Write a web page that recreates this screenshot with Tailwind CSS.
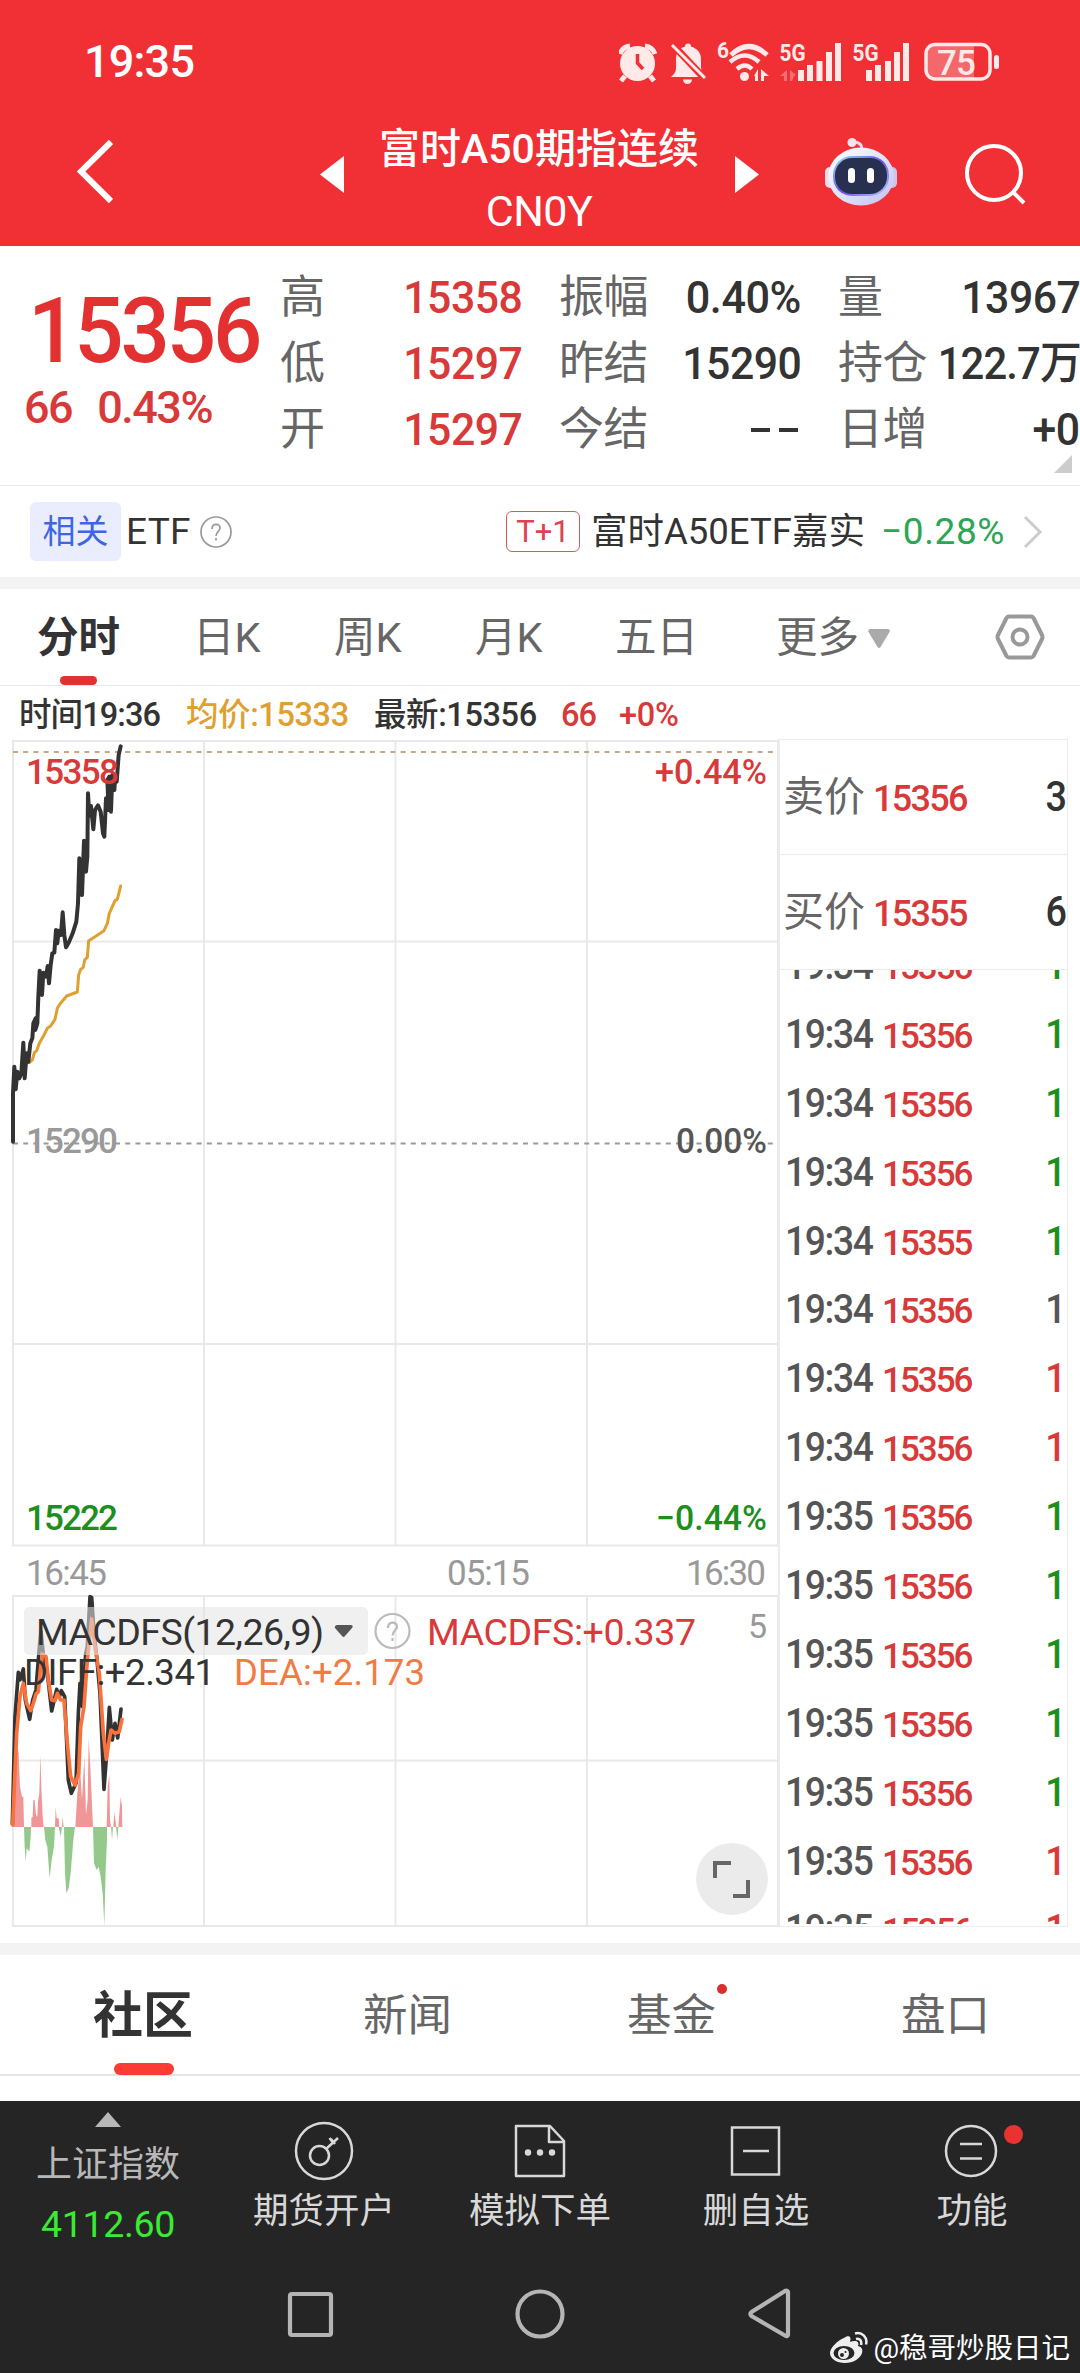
<!DOCTYPE html>
<html lang="zh-CN">
<head>
  <meta charset="UTF-8" />
  <meta name="viewport" content="width=device-width, initial-scale=1.0" />
  <title>富时A50期指连续 CN0Y</title>
  <script src="https://cdn.jsdelivr.net/npm/@tailwindcss/browser@4"></script>
</head>
<body class="w-[1080px] h-[2373px] overflow-hidden bg-white text-[#333] font-[Roboto,'Noto_Sans_CJK_SC',sans-serif] whitespace-nowrap flex flex-col">

  <!-- Header -->
  <header class="h-[246px] shrink-0 bg-[#f13035] text-white">
    <div class="h-[123px] flex items-center justify-between pl-[84px] pr-[80px]">
      <span class="text-[45px] leading-none font-medium tracking-[-0.8px]">19:35</span>
      <svg class="w-[381px] h-[50px] mt-px" viewBox="619 36 381 50" fill="#ffe9e9">
        <!-- alarm -->
        <circle cx="637.500" cy="62.500" r="17.500"/>
        <path d="M620 53a12 12 0 0 1 10-8M655 53a12 12 0 0 0-10-8" stroke="#ffe9e9" stroke-width="5" fill="none"/>
        <path d="M625 75l-4 5M650 75l4 5" stroke="#ffe9e9" stroke-width="5"/>
        <path d="M637.500 53v9l5.500 6" stroke="#f13035" stroke-width="3.500" fill="none"/>
        <!-- muted bell -->
        <path d="M671 76c3-3 5-5 5-9V58c0-7 4-11 9-12.500a3 3 0 0 1 6 0c6 2 10 6 10 12.500v8c0 4 2 7 5 10z"/>
        <path d="M683 78.500h9a4.500 4.500 0 0 1-9 0z"/>
        <path d="M674 45l32 34" stroke="#f13035" stroke-width="7"/>
        <path d="M672 44l33 33" stroke="#ffe9e9" stroke-width="3"/>
        <!-- wifi -->
        <text x="717" y="57" font-size="22" font-weight="700" textLength="12" lengthAdjust="spacingAndGlyphs">6</text>
        <g fill="none" stroke="#ffe9e9" stroke-width="5">
          <path d="M731 54q18-17 36 0"/>
          <path d="M730 61q15-13 29 0" stroke-width="4.500"/>
          <path d="M737 68q8-7 15 0" stroke-width="4.500"/>
        </g>
        <circle cx="744.500" cy="75.500" r="4.500"/>
        <path d="M758 68v12h-3v-5h-1zM761 68l8 7-5 0v5h-3z"/>
        <path d="M787 69v11h-3v-5h-4zM790 69l6 5-2 1-2 5h-2z" opacity=".35"/>
        <!-- signals -->
        <text x="779.500" y="60" font-size="24" font-weight="700" textLength="26" lengthAdjust="spacingAndGlyphs">5G</text>
        <path d="M798 69h6v11h-6zM807 64h6v16h-6zM816.500 60h6v20h-6zM826 51h6v29h-6zM835 42h6v38h-6z"/>
        <text x="852.500" y="60" font-size="24" font-weight="700" textLength="26" lengthAdjust="spacingAndGlyphs">5G</text>
        <path d="M866 69h6v11h-6zM875 64h6v16h-6zM885 60h6v20h-6zM894 51h6v29h-6zM903 42h6v38h-6z"/>
        <!-- battery -->
        <path d="M935 44h39v34h-39a9 9 0 0 1-9-9V53a9 9 0 0 1 9-9z" opacity=".3"/>
        <rect x="926" y="43.500" width="64" height="34.500" rx="9" fill="none" stroke="#ffe9e9" stroke-width="3.500"/>
        <rect x="994" y="54" width="5" height="14" rx="2.500"/>
        <text x="937" y="73.500" font-size="35" font-weight="500" textLength="39">75</text>
      </svg>
    </div>
    <div class="h-[123px] flex">
      <svg class="w-[36px] h-[68px] ml-[77px] mt-[15px]" viewBox="0 0 36 68" fill="none" stroke="#fff" stroke-width="6"><path d="M34 4L4 33.500 34 63"/></svg>
      <svg class="w-[24px] h-[37px] ml-[207px] mt-[33px]" viewBox="0 0 24 37" fill="#fff"><path d="M24 0v37L0 18.500z"/></svg>
      <h1 class="w-[320px] ml-[35px] -mt-[5px] text-center text-[41px] leading-[62px]">
        <div class="font-medium">富时A50期指连续</div>
        <div class="text-[43px] tracking-[-0.5px]">CN0Y</div>
      </h1>
      <svg class="w-[24px] h-[37px] ml-[36px] mt-[33px]" viewBox="0 0 24 37" fill="#fff"><path d="M0 0v37L24 18.500z"/></svg>
      <svg class="w-[74px] h-[70px] ml-[65px] mt-[14px]" viewBox="0 0 74 70">
        <defs>
          <linearGradient id="shell" x1="0" y1="0" x2="1" y2="1"><stop offset="0" stop-color="#fff"/><stop offset=".5" stop-color="#dfe4fb"/><stop offset="1" stop-color="#c3bff2"/></linearGradient>
          <linearGradient id="rim" x1="0" y1="0" x2="1" y2="1"><stop offset="0" stop-color="#8fe6f7"/><stop offset=".5" stop-color="#6a4fe0"/><stop offset="1" stop-color="#b5c9ff"/></linearGradient>
        </defs>
        <path d="M38 12c0-5-3-7-9-7" stroke="#e9d9ee" stroke-width="3" fill="none"/>
        <circle cx="28" cy="5.500" r="4.500" fill="#f6e2ea"/>
        <rect x="1" y="30" width="12" height="21" rx="5" fill="#ecd9ec"/>
        <rect x="61" y="30" width="12" height="21" rx="5" fill="#cfc4ee"/>
        <ellipse cx="37" cy="39.500" rx="33" ry="29" fill="url(#shell)"/>
        <rect x="9" y="19" width="56" height="40" rx="19" fill="url(#rim)"/>
        <rect x="11" y="21" width="52" height="36" rx="17" fill="#27304f"/>
        <rect x="24" y="31" width="7" height="15" rx="3.500" fill="#fff"/>
        <rect x="43" y="31" width="7" height="15" rx="3.500" fill="#fff"/>
      </svg>
      <svg class="w-[64px] h-[64px] ml-[64px] mt-[19px]" viewBox="0 0 64 64" fill="none" stroke="#fff" stroke-width="4"><circle cx="32" cy="31" r="27"/><path d="M51 50l11 11"/></svg>
    </div>
  </header>

  <!-- Quote -->
  <section class="relative h-[240px] shrink-0 flex border-b border-[#e8e8e8]">
    <div class="w-[280px] shrink-0 pt-[45px] text-[#e33131]">
      <div class="ml-[28px] w-[240px] origin-left scale-x-[.955] text-[91px] leading-[80px] font-medium tracking-[-3.3px]">15356</div>
      <div class="pl-[24px] mt-[17px] flex gap-[25px] text-[45px] leading-[40px] font-medium tracking-[-1.5px] text-[#d83a3a]"><span>66</span><span>0.43%</span></div>
    </div>
    <div class="flex-1 pt-[19px] grid grid-cols-3 gap-x-[37px] auto-rows-[66px] text-[45px] leading-[66px] tracking-[-0.5px]">
      <div class="flex justify-between"><span class="text-[#666]">高</span><span class="origin-right scale-x-[.95] font-medium text-[#d83a3a]">15358</span></div>
      <div class="flex justify-between"><span class="text-[#666]">振幅</span><span class="origin-right scale-x-[.96] font-medium">0.40%</span></div>
      <div class="flex justify-between"><span class="text-[#666]">量</span><span class="origin-right scale-x-[.95] font-medium">13967</span></div>
      <div class="flex justify-between"><span class="text-[#666]">低</span><span class="origin-right scale-x-[.95] font-medium text-[#d83a3a]">15297</span></div>
      <div class="flex justify-between"><span class="text-[#666]">昨结</span><span class="origin-right scale-x-[.95] font-medium">15290</span></div>
      <div class="flex justify-between"><span class="text-[#666]">持仓</span><span class="origin-right scale-x-[.93] font-medium tracking-[-1px]">122.7万</span></div>
      <div class="flex justify-between"><span class="text-[#666]">开</span><span class="origin-right scale-x-[.95] font-medium text-[#d83a3a]">15297</span></div>
      <div class="flex justify-between"><span class="text-[#666]">今结</span><span class="flex items-center gap-[9px] pr-[3px]"><i class="w-[19px] h-[4px] bg-[#333]"></i><i class="w-[19px] h-[4px] bg-[#333]"></i></span></div>
      <div class="flex justify-between"><span class="text-[#666]">日增</span><span class="origin-right scale-x-[.95] font-medium">+0</span></div>
    </div>
    <svg class="absolute right-[8px] bottom-[12px] w-[18px] h-[18px]" viewBox="0 0 18 18" fill="#ccc"><path d="M18 0v18H0z"/></svg>
  </section>

  <!-- Related ETF -->
  <section class="h-[91px] shrink-0 flex items-center pl-[30px] text-[36.500px] leading-[60px]">
    <span class="w-[91px] h-[59px] rounded-[6px] bg-[#e9edfd] text-[#3f66e0] text-[33px] text-center">相关</span>
    <span class="ml-[5px] w-[65px] text-[37px] tracking-[0.3px]">ETF</span>
    <svg class="w-[32px] h-[32px] ml-[9px]" viewBox="0 0 32 32" fill="none" stroke="#999" stroke-width="1.700"><circle cx="16" cy="16" r="15"/><path d="M12 13c0-6 8-6 8-1 0 3-4 4-4 8M16 22v2.500"/></svg>
    <span class="w-[74px] h-[41px] ml-[274px] rounded-[6px] border border-[#d65c5c] text-[#dd4250] text-[31px] leading-[39px] text-center">T+1</span>
    <span class="ml-[11px] w-[274px]">富时A50ETF嘉实</span>
    <span class="ml-[16px] w-[124px] text-[37px] text-[#2ba653] tracking-[0.6px]">−0.28%</span>
    <svg class="w-[20px] h-[34px] ml-[18px]" viewBox="0 0 20 34" fill="none" stroke="#ccc" stroke-width="3"><path d="M2 2l15 15L2 32"/></svg>
  </section>
  <div class="h-[12px] shrink-0 bg-[#f3f3f3]"></div>

  <!-- Period tabs -->
  <nav class="relative h-[97px] shrink-0 flex items-center pt-[2px] border-b border-[#e8e8e8] text-[41.500px] leading-none text-[#666]">
    <span class="ml-[37px] w-[156px] font-bold text-[#333]">分时</span>
    <span class="w-[141px]">日K</span>
    <span class="w-[141px]">周K</span>
    <span class="w-[140px]">月K</span>
    <span class="w-[161px]">五日</span>
    <span>更多</span>
    <svg class="w-[22px] h-[19px] ml-[9px]" viewBox="0 0 22 19" fill="#aaa"><path d="M2 0h18q3 1 1.500 3L12.500 18q-1.500 2-3 0L.500 3Q-.500 1 2 0z"/></svg>
    <svg class="w-[50px] h-[50px] ml-[105px] -mt-[2px]" viewBox="0 0 50 50" fill="none" stroke="#999" stroke-width="4" stroke-linejoin="round"><path d="M14 4.500h22q1.500 0 2.500 1.500l8.500 17q1 2 0 4l-8.500 17q-1 1.500-2.500 1.500H14q-1.500 0-2.500-1.500L3 27q-1-2 0-4l8.500-17q1-1.500 2.500-1.500z"/><circle cx="25" cy="25" r="7.500"/></svg>
    <i class="absolute left-[60px] bottom-0 w-[37px] h-[9px] rounded-full bg-[#e33131]"></i>
  </nav>

  <!-- Crosshair info -->
  <div class="h-[53px] shrink-0 flex items-center pt-[6px] pl-[19px] text-[32.500px] leading-none font-medium tracking-[-0.9px]">
    <span class="w-[167px]">时间19:36</span>
    <span class="w-[188px] text-[#e0a02f] tracking-[-0.4px]">均价:15333</span>
    <span class="w-[187px] tracking-[-0.4px]">最新:15356</span>
    <span class="w-[58px] text-[#d83a3a]">66</span>
    <span class="text-[#d83a3a] tracking-[-0.3px]">+0%</span>
  </div>

  <main class="h-[1204px] shrink-0 flex">
    <!-- Minute chart and MACD -->
    <svg class="w-[778px] h-[1190px] shrink-0" viewBox="0 739 778 1190">
      <g fill="none" stroke="#e9e9e9" stroke-width="2">
        <path d="M13 741H778V1545.500H13zM204 741V1545M395.500 741V1545M587 741V1545M13 941.500H778M13 1344H778"/>
        <path d="M13 1596H778V1926H13zM204 1596V1926M395.500 1596V1926M587 1596V1926M13 1760.500H778"/>
      </g>
      <path d="M13 752H778" stroke="#c4a982" stroke-width="1.800" stroke-dasharray="5 5.200"/>
      <path d="M13 1143.500H778" stroke="#999" stroke-width="1.800" stroke-dasharray="5 5.200"/>

      <svg x="0" y="730" width="140" height="430" viewBox="0 0 420 1290" fill="none" stroke-linejoin="round" stroke-linecap="round">
        <polyline stroke="#e0a02f" stroke-width="9" points="88,998 97,990 103,968 110,962 118,940 132,915 142,895 152,888 165,868 172,835 180,822 200,798 232,786 236,735 242,718 250,712 254,690 262,682 266,632 276,626 312,602 322,580 328,550 345,512 352,508 362,468"/>
        <polyline stroke="#333" stroke-width="12" points="39,1235 39,1090 43,1010 47,1078 52,1025 58,1045 64,1030 70,938 74,1045 80,970 85,995 91,940 97,925 100,880 107,865 106,900 112,880 115,800 119,722 126,795 130,728 138,740 143,708 147,760 152,705 157,670 163,668 168,600 172,640 176,602 183,615 188,547 193,615 198,652 206,638 218,610 229,575 234,520 238,385 246,495 252,332 258,425 262,380 264,190 268,258 273,228 280,298 285,240 294,226 302,245 309,310 313,320 318,205 326,240 322,150 328,140 333,245 337,135 343,180 345,150 350,155 356,75 362,49"/>
      </svg>

      <g font-size="35" font-weight="500">
        <text x="26" y="784" fill="#d83a3a" textLength="93">15358</text>
        <text x="655" y="784" fill="#d83a3a" textLength="112" lengthAdjust="spacingAndGlyphs">+0.44%</text>
        <text x="26" y="1153" fill="#999" textLength="92">15290</text>
        <text x="676" y="1153" fill="#555" textLength="91" lengthAdjust="spacingAndGlyphs">0.00%</text>
        <text x="26" y="1529.500" fill="#1c8f1c" textLength="92">15222</text>
        <text x="656" y="1529.500" fill="#1c8f1c" textLength="111" lengthAdjust="spacingAndGlyphs">−0.44%</text>
        <g fill="#999" font-weight="400">
          <text x="26" y="1584.500" textLength="81">16:45</text>
          <text x="447" y="1584.500" textLength="83">05:15</text>
          <text x="686" y="1584.500" textLength="80">16:30</text>
          <text x="748" y="1638" font-size="34" textLength="18">5</text>
        </g>
      </g>

      <!-- MACD bars and lines -->
      <svg x="0" y="1500" width="140" height="440" viewBox="0 0 420 1320" fill="none" stroke-linejoin="round" stroke-linecap="round">
        <path fill="#f09696" d="M38 981L46 800 52 740 56 760 60 860 66 890 70 890 72 981zM94 981V955L98 950 100 900 104 900 108 945 112 950 114 905 118 880 121 765 124 860 128 950 131 981zM165 981L167 920 170 955 176 955 178 981zM186 981L188 950 191 981zM226 981L232 880 240 800 246 900 253 770 258 945 263 900 266 715 271 800 278 960 279 981zM320 981L323 860 328 825 330 960 333 981zM340 981L343 935 349 981zM355 981L362 890 366 920 367 981z"/>
        <path fill="#94c98b" d="M72 981L74 1040 77 1085 80 1045 88 1055 92 1010 93 981zM132 981L136 1020 142 1040 149 1135 155 1080 162 1040 165 981zM176 981L182 1010 186 981zM192 981L195 1120 199 1180 206 1165 212 1120 220 1020 225 981zM279 981L282 1090 290 1110 296 1100 302 1130 308 1180 313 1277 317 1110 321 1020V981zM333 981L336 1020 339 981zM348 981L352 1020 355 981z"/>
        <polyline stroke="#333" stroke-width="11" points="37,972 45,650 55,517 60,540 70,507 76,600 89,658 98,600 108,570 115,480 119,430 123,395 130,465 142,520 155,633 165,590 170,568 178,590 184,572 194,590 205,840 214,880 228,850 235,640 240,550 247,620 257,462 262,440 270,290 275,292 282,400 290,470 300,580 312,868 320,760 328,622 337,720 345,670 353,714 363,627"/>
        <polyline stroke="#f9723c" stroke-width="11" points="38,975 50,700 60,590 70,550 80,610 92,632 100,610 108,582 115,575 122,500 128,462 138,470 145,540 155,600 165,602 172,580 182,600 192,600 202,730 212,830 225,855 236,820 242,680 252,620 262,480 275,357 285,440 298,520 310,700 319,778 326,730 333,690 345,700 358,695 366,658"/>
      </svg>

      <rect x="24" y="1607" width="344" height="48" rx="5" fill="#e3e3e3" fill-opacity=".55"/>
      <text x="36" y="1645" font-size="37.500" fill="#333" textLength="288">MACDFS(12,26,9)</text>
      <path d="M337 1625h14q3 1 1 3l-7 8q-1.500 2-3 0l-7-8q-1-2 2-3z" fill="#555"/>
      <g fill="none" stroke="#bbb" stroke-width="2.200"><circle cx="392.500" cy="1631" r="17"/><path d="M388 1628c0-7 9-7 9-1 0 3-4.500 4-4.500 8.500M392.500 1638v3"/></g>
      <text x="427" y="1645" font-size="37.500" fill="#d83a3a" textLength="269">MACDFS:+0.337</text>
      <text x="24" y="1684.500" font-size="36.500" fill="#333" textLength="191">DIFF:+2.341</text>
      <text x="234" y="1684.500" font-size="36.500" fill="#f07c45" textLength="191">DEA:+2.173</text>

      <circle cx="732" cy="1879" r="36" fill="#ebebeb"/>
      <path d="M715 1878v-15h16M733 1896h15v-16" fill="none" stroke="#666" stroke-width="4"/>
    </svg>

    <!-- Order book and ticks -->
    <aside class="w-[290px] h-[1188px] flex flex-col border border-[#ececec] border-l-2">
      <div class="h-[115px] shrink-0 flex items-center pl-[3px] border-b border-[#ececec] text-[41px] leading-none">
        <span class="text-[#666]">卖价</span>
        <span class="ml-[8px] mt-[3px] text-[36px] font-medium tracking-[-1.700px] text-[#d83a3a]">15356</span>
        <span class="ml-auto origin-right scale-x-[.9] text-[42px] font-medium">3</span>
      </div>
      <div class="h-[115px] shrink-0 flex items-center pl-[3px] border-b border-[#ececec] text-[41px] leading-none">
        <span class="text-[#666]">买价</span>
        <span class="ml-[8px] mt-[3px] text-[36px] font-medium tracking-[-1.700px] text-[#d83a3a]">15355</span>
        <span class="ml-auto origin-right scale-x-[.9] text-[42px] font-medium">6</span>
      </div>
      <!-- scrolled list, first and last rows half hidden -->
      <div class="h-[954px] overflow-hidden">
        <div id="ticks" class="-mt-[39px]"></div>
      </div>
    </aside>
  </main>

  <div class="h-[12px] shrink-0 bg-[#f3f3f3]"></div>

  <!-- Content tabs -->
  <nav class="relative h-[121px] shrink-0 flex items-center pt-[3px] border-b-2 border-[#e5e5e5] text-[44.500px] leading-none text-[#666]">
    <span class="ml-[93px] w-[270px] text-[50px] font-bold text-[#333]">社区</span>
    <span class="w-[264px]">新闻</span>
    <span class="w-[274px]">基金</span>
    <span>盘口</span>
    <i class="absolute left-[717px] top-[29px] w-[10px] h-[10px] rounded-full bg-[#d92f2f]"></i>
    <i class="absolute left-[114px] -bottom-px w-[60px] h-[12px] rounded-full bg-[#fb3c35]"></i>
  </nav>
  <div class="h-[25px] shrink-0"></div>

  <!-- Toolbar -->
  <footer class="h-[272px] shrink-0 bg-[#252525] text-[#d8d8d8]">
    <div class="h-[166px] grid grid-cols-5 text-[35.500px] leading-[40px] text-center">
      <div class="flex flex-col items-center pt-[11px] text-[#b8b8b8]">
        <svg class="w-[26px] h-[15px]" viewBox="0 0 26 15" fill="#b8b8b8"><path d="M13 0l13 15H0z"/></svg>
        <span class="mt-[18px] text-[36px]">上证指数</span>
        <span class="mt-[19px] text-[37.500px] text-[#3bea33] tracking-[-0.3px]">4112.60</span>
      </div>
      <div class="flex flex-col items-center pt-[20px]">
        <svg class="w-[60px] h-[60px]" viewBox="0 0 60 60" fill="none" stroke="#d8d8d8" stroke-width="2.500"><circle cx="30" cy="30" r="28"/><circle cx="25.500" cy="34.500" r="9.500"/><path d="M32 28l12-11M37 18l4 5M35.500 17l3 4"/></svg>
        <span class="mt-[10px]">期货开户</span>
      </div>
      <div class="flex flex-col items-center pt-[20px]">
        <svg class="w-[60px] h-[60px]" viewBox="0 0 60 60" fill="none" stroke="#d8d8d8" stroke-width="2.500" stroke-linejoin="round"><path d="M6 5h34l14 15v35H6zM39 5v16h15"/><g fill="#d8d8d8" stroke="none"><circle cx="18" cy="31.500" r="3.200"/><circle cx="30" cy="31.500" r="3.200"/><circle cx="42" cy="31.500" r="3.200"/></g></svg>
        <span class="mt-[10px]">模拟下单</span>
      </div>
      <div class="flex flex-col items-center pt-[20px]">
        <svg class="w-[60px] h-[60px]" viewBox="0 0 60 60" fill="none" stroke="#d8d8d8" stroke-width="2.500"><path d="M6 6.500h47v47H6zM17 30h26"/></svg>
        <span class="mt-[10px]">删自选</span>
      </div>
      <div class="relative flex flex-col items-center pt-[20px]">
        <svg class="w-[60px] h-[60px]" viewBox="0 0 60 60" fill="none" stroke="#d8d8d8" stroke-width="2.500"><circle cx="29" cy="30" r="25"/><path d="M18 23h22M18 37.500h22"/></svg>
        <i class="absolute left-[140px] top-[24px] w-[19px] h-[19px] rounded-full bg-[#e93232]"></i>
        <span class="mt-[10px]">功能</span>
      </div>
    </div>
    <!-- System navigation -->
    <div class="relative h-[106px] flex pt-[20px]">
      <svg class="w-[510px] h-[54px] ml-[284px]" viewBox="284 2287 510 54" fill="none" stroke="#b5b5b5" stroke-width="4.200" stroke-linejoin="round"><rect x="290" y="2294" width="41" height="41" rx="2"/><circle cx="540" cy="2314" r="22.500"/><path d="M788 2292v43q-.500 2-3 .500L751.500 2316q-2-2 0-4L785 2291q2-1 3 1z"/></svg>
      <div class="absolute right-[10px] top-[62px] flex items-center text-[28.500px] leading-[36px] text-white">
        <svg class="w-[39px] h-[34px] mr-[5px]" viewBox="0 0 39 34" fill="#eee">
          <path d="M15 7c4-3 8-2 6 4 5-2 10-1 8 4 4 1 5 4 4 7-2 6-9 10-17 10C8 32 1 28 1 22 1 17 9 9 15 7z"/>
          <ellipse cx="15" cy="22" rx="10.500" ry="7" fill="#252525"/>
          <circle cx="14.500" cy="22.500" r="5.500"/><circle cx="13" cy="24" r="2" fill="#252525"/><circle cx="16.500" cy="21" r="1" fill="#252525"/>
          <path d="M27 8c4-1 6 2 5 6M26 2.500c7-2 13 4 11 11" fill="none" stroke="#eee" stroke-width="2.500"/>
        </svg>
        <span class="mt-[2px]">@稳哥炒股日记</span>
      </div>
    </div>
  </footer>

  <script>
    // time, price, volume colour
    const GREEN = 'text-[#1c8f1c]', RED = 'text-[#d83a3a]', GREY = 'text-[#555]';
    const ticks = [
      ['19:34', 15356, GREEN],
      ['19:34', 15356, GREEN],
      ['19:34', 15356, GREEN],
      ['19:34', 15356, GREEN],
      ['19:34', 15355, GREEN],
      ['19:34', 15356, GREY],
      ['19:34', 15356, RED],
      ['19:34', 15356, RED],
      ['19:35', 15356, GREEN],
      ['19:35', 15356, GREEN],
      ['19:35', 15356, GREEN],
      ['19:35', 15356, GREEN],
      ['19:35', 15356, GREEN],
      ['19:35', 15356, RED],
      ['19:35', 15356, RED],
    ];
    document.getElementById('ticks').innerHTML = ticks.map(([time, price, color]) => `
      <div class="h-[68.900px] flex items-baseline pl-[5px] pr-[1px] leading-[68px] font-medium">
        <span class="w-[97px] origin-left scale-x-[.93] text-[40px] tracking-[-1.500px] text-[#555]">${time}</span>
        <span class="text-[35px] tracking-[-2px] text-[#d83a3a]">${price}</span>
        <span class="ml-auto origin-right scale-x-[.9] text-[41px] ${color}">1</span>
      </div>`).join('');
  </script>
</body>
</html>
